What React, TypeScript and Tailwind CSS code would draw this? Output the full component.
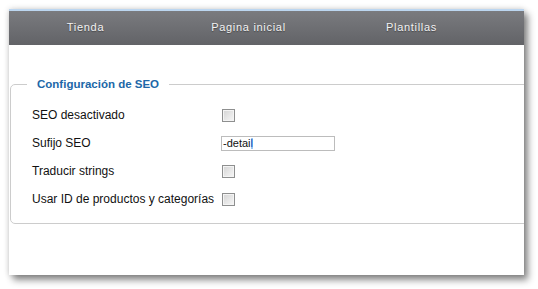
import React from 'react';

const navItems = ['Tienda', 'Pagina inicial', 'Plantillas'];

const Checkbox: React.FC = () => (
  <span className="block w-[13px] h-[13px] border border-[#8e8f8f] bg-gradient-to-br from-[#d4d4d4] to-[#f7f7f7] shadow-[inset_0_0_0_1px_#f4f4f4]" />
);

const App: React.FC = () => {
  return (
    <div className="w-[538px] h-[289px] bg-white pt-[9px] pl-[9px] font-['Liberation_Sans',Arial,sans-serif]">
      <div className="w-[515px] h-[266px] bg-white overflow-hidden border-t-2 border-[#bcd6f0] shadow-[0_0_6px_rgba(0,0,0,0.18),4px_5px_7px_rgba(0,0,0,0.45)]">
        {/* Top menu */}
        <div className="h-[34px] flex gap-[10px] bg-gradient-to-b from-[#7a7b7f] to-[#626367]">
          {navItems.map((item) => (
            <div
              key={item}
              className="w-[153px] pt-[8px] text-center text-[11px] tracking-[0.7px] text-[#f2f2f2] [text-shadow:0_1px_1px_rgba(0,0,0,0.35)]"
            >
              {item}
            </div>
          ))}
        </div>

        {/* SEO settings */}
        <fieldset className="mt-[31px] ml-[1px] -mr-3 border border-[#cccccc] rounded-[5px] pl-[21px] pt-[8px] pb-[10px]">
          <legend className="-ml-[5px] px-[10px] text-[11.5px] font-bold text-[#2067a8]">
            Configuración de SEO
          </legend>
          <div className="flex flex-col text-[12px] text-[#111111]">
            <div className="h-[28px] flex items-center">
              <span className="w-[190px] whitespace-nowrap">SEO desactivado</span>
              <Checkbox />
            </div>
            <div className="h-[28px] flex items-center">
              <span className="w-[190px] whitespace-nowrap">Sufijo SEO</span>
              <div className="-ml-[1px] w-[114px] h-[15px] border border-[#bcbcbc] flex items-center pl-[1px] text-[11px] leading-none">
                <span>-detai</span>
                <span className="bg-[#9cc6f2] text-[#1155bb]">l</span>
              </div>
            </div>
            <div className="h-[28px] flex items-center">
              <span className="w-[190px] whitespace-nowrap">Traducir strings</span>
              <Checkbox />
            </div>
            <div className="h-[28px] flex items-center">
              <span className="w-[190px] whitespace-nowrap">Usar ID de productos y categorías</span>
              <Checkbox />
            </div>
          </div>
        </fieldset>
      </div>
    </div>
  );
};

export default App;
